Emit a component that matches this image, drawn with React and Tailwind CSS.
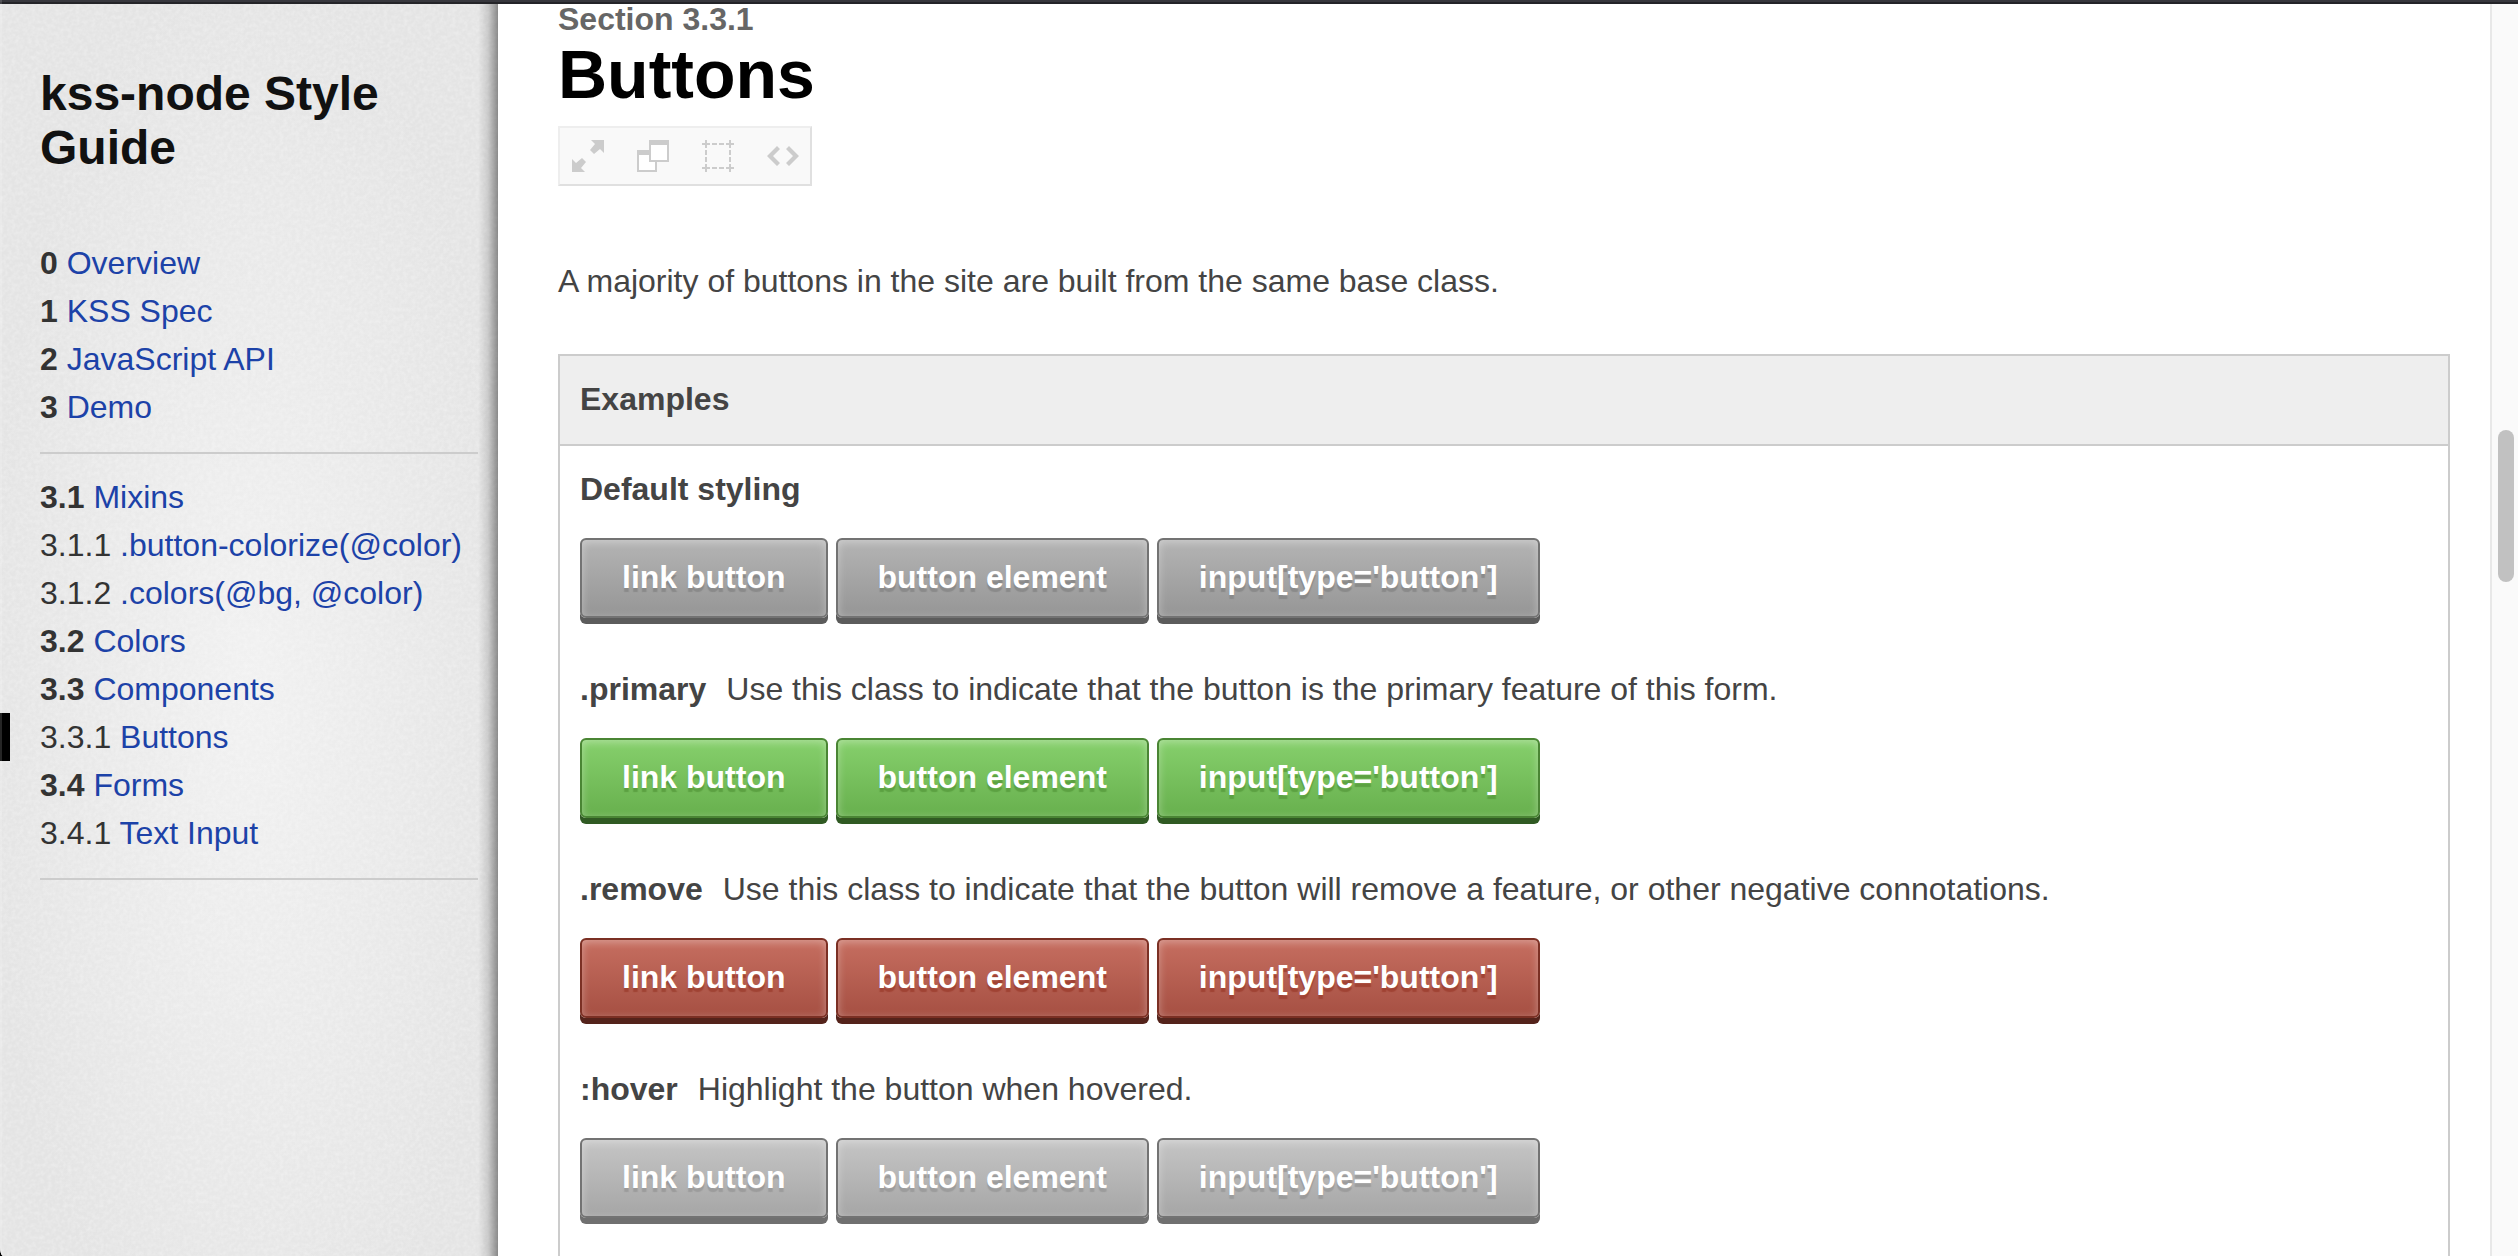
const primaryNav = [
  ['0', 'Overview'],
  ['1', 'KSS Spec'],
  ['2', 'JavaScript API'],
  ['3', 'Demo'],
]

const sectionNav = [
  ['3.1', 'Mixins'],
  ['3.1.1', '.button-colorize(@color)'],
  ['3.1.2', '.colors(@bg, @color)'],
  ['3.2', 'Colors'],
  ['3.3', 'Components'],
  ['3.3.1', 'Buttons'],
  ['3.4', 'Forms'],
  ['3.4.1', 'Text Input'],
]

const current = '3.3.1'

const tones = {
  gray: 'border-[#737373] from-[#b4b4b4] to-[#969696] shadow-[0_6px_0_#5c5c5c,inset_0_2px_8px_rgba(255,255,255,0.35)] [text-shadow:0_4px_1px_#8a8a8a]',
  green: 'border-[#4a8534] from-[#86d06c] to-[#68b04e] shadow-[0_6px_0_#305a23,inset_0_2px_8px_rgba(255,255,255,0.35)] [text-shadow:0_4px_1px_#5ca142]',
  red: 'border-[#7b3024] from-[#c66e60] to-[#a65043] shadow-[0_6px_0_#54231b,inset_0_2px_8px_rgba(255,255,255,0.35)] [text-shadow:0_4px_1px_#a04334]',
  hover: 'border-[#737373] from-[#c5c5c5] to-[#a6a6a6] shadow-[0_6px_0_#707070,inset_0_2px_8px_rgba(255,255,255,0.35)] [text-shadow:0_4px_1px_#9c9c9c]',
}

const examples = [
  { name: 'Default styling', tone: 'gray' },
  { name: '.primary', text: 'Use this class to indicate that the button is the primary feature of this form.', tone: 'green' },
  { name: '.remove', text: 'Use this class to indicate that the button will remove a feature, or other negative connotations.', tone: 'red' },
  { name: ':hover', text: 'Highlight the button when hovered.', tone: 'hover' },
]

const buttonBase =
  'inline-block cursor-pointer rounded-md border-2 bg-linear-to-b px-10 pt-[13px] pb-[15px] text-[32px] leading-[48px] font-bold text-white'

function NavList({ items }) {
  return (
    <ul className="border-b-2 border-[#cccccc] pb-[21px]">
      {items.map(([ref, title]) => (
        <li
          key={ref}
          className={
            ref === current
              ? '-ml-10 border-l-10 border-black pl-[30px] whitespace-nowrap'
              : 'whitespace-nowrap'
          }
        >
          <span className={ref.split('.').length > 2 ? '' : 'font-bold'}>{ref}</span>{' '}
          <a href={'#' + ref} className="text-[#1c42a8]">{title}</a>
        </li>
      ))}
    </ul>
  )
}

function Tool({ label, children }) {
  return (
    <button type="button" aria-label={label} className="flex size-8 items-center justify-center text-[#cccccc]">
      <svg viewBox="0 0 32 32" className="size-8" fill="currentColor" aria-hidden="true">
        {children}
      </svg>
    </button>
  )
}

function Toolbar() {
  return (
    <div className="mt-[18px] flex h-[60px] w-fit items-center gap-[33px] border-2 border-t-[#eeeeee] border-r-[#e0e0e0] border-b-[#e0e0e0] border-l-[#eeeeee] bg-[#f9f9f9] pr-[11px] pl-3">
      <Tool label="Toggle full screen">
        <path d="M19 0H32V13L28 9L22 14L18 10L23 4Z" />
        <path d="M0 19L4 23L10 18L14 22L9 28L13 32H0Z" />
      </Tool>
      <Tool label="Open in new window">
        <path d="M0 10H20V32H0Z" />
        <path fill="#fff" d="M2 15H18V30H2Z" />
        <path d="M12 0H32V22H12Z" />
        <path fill="#fff" d="M14 5H30V20H14Z" />
      </Tool>
      <Tool label="Toggle example guides">
        <path d="M3 0h2v3h3v2H5v3H3V5H0V3h3ZM27 0h2v3h3v2h-3v3h-2V5h-3V3h3ZM3 24h2v3h3v2H5v3H3v-3H0v-2h3ZM27 24h2v3h3v2h-3v3h-2v-3h-3v-2h3Z" />
        <path d="M10 3h5v2h-5ZM17 3h5v2h-5ZM10 27h5v2h-5ZM17 27h5v2h-5ZM3 10h2v5H3ZM3 17h2v5H3ZM27 10h2v5h-2ZM27 17h2v5h-2Z" />
      </Tool>
      <Tool label="Toggle HTML markup">
        <path d="M10 6L13 9L6 16L13 23L10 26L0 16Z" />
        <path d="M22 6L19 9L26 16L19 23L22 26L32 16Z" />
      </Tool>
    </div>
  )
}

export default function App() {
  return (
    <div className="bg-black">
      <div className="relative flex h-screen flex-col overflow-hidden rounded-bl-[3px_10px] bg-white font-['Liberation_Sans',Arial,sans-serif] text-[32px] leading-[48px] text-[#444444]">
        <div className="h-1 shrink-0 border-b-2 border-[#242428] bg-[#37373d]" />
        <div className="flex min-h-0 grow">
          <aside className="relative w-[498px] shrink-0 bg-[radial-gradient(ellipse_at_50%_55%,#f1f1f1,#e4e4e4_75%)] pt-[63px] pr-5 pl-10 text-[#333333]">
            <svg className="pointer-events-none absolute inset-0 size-full opacity-35" aria-hidden="true">
              <filter id="paper">
                <feTurbulence type="fractalNoise" baseFrequency="0.25" numOctaves="2" />
                <feColorMatrix values="0 0 0 0 1  0 0 0 0 1  0 0 0 0 1  1.5 0 0 0 -0.5" />
              </filter>
              <rect width="100%" height="100%" filter="url(#paper)" />
            </svg>
            <div className="pointer-events-none absolute inset-y-0 right-0 w-5 bg-linear-to-l from-black/40 via-black/12 to-transparent" />
            <div className="relative">
              <h1 className="text-[48px] leading-[54px] font-bold text-[#111111]">kss-node Style Guide</h1>
              <nav className="mt-16 flex flex-col gap-[19px]">
                <NavList items={primaryNav} />
                <NavList items={sectionNav} />
              </nav>
            </div>
          </aside>

          <main className="min-w-0 grow pr-10 pl-[60px]">
            <p className="leading-[30px] font-bold text-[#666666]">Section 3.3.1</p>
            <h2 className="mt-1.5 text-[68px] leading-[68px] font-bold text-black">Buttons</h2>
            <Toolbar />
            <p className="mt-[71px]">A majority of buttons in the site are built from the same base class.</p>
            <section className="mt-[49px] border-2 border-[#cccccc]">
              <h3 className="border-b-2 border-[#cccccc] bg-[#eeeeee] px-5 pt-[19px] pb-[21px] font-bold">Examples</h3>
              <div className="flex flex-col gap-[47px] px-5 pt-[19px] pb-12">
                {examples.map(({ name, text, tone }) => (
                  <div key={name}>
                    <p>
                      <strong>{name}</strong>
                      {text && <span className="ml-5">{text}</span>}
                    </p>
                    <div className="mt-[25px] flex gap-2">
                      <a href="#3.3.1" className={buttonBase + ' ' + tones[tone]}>link button</a>
                      <button type="button" className={buttonBase + ' ' + tones[tone]}>button element</button>
                      <input type="button" value="input[type='button']" className={buttonBase + ' ' + tones[tone]} />
                    </div>
                  </div>
                ))}
              </div>
            </section>
          </main>

          <div className="w-7 shrink-0 border-l-2 border-[#e8e8e8] bg-[#fafafa] pt-[426px] pl-1.5">
            <div className="h-[152px] w-4 rounded-full bg-[#c1c1c1]" />
          </div>
        </div>
        <div className="pointer-events-none absolute inset-y-0 left-0 w-0.5 bg-white/15" />
      </div>
    </div>
  )
}
